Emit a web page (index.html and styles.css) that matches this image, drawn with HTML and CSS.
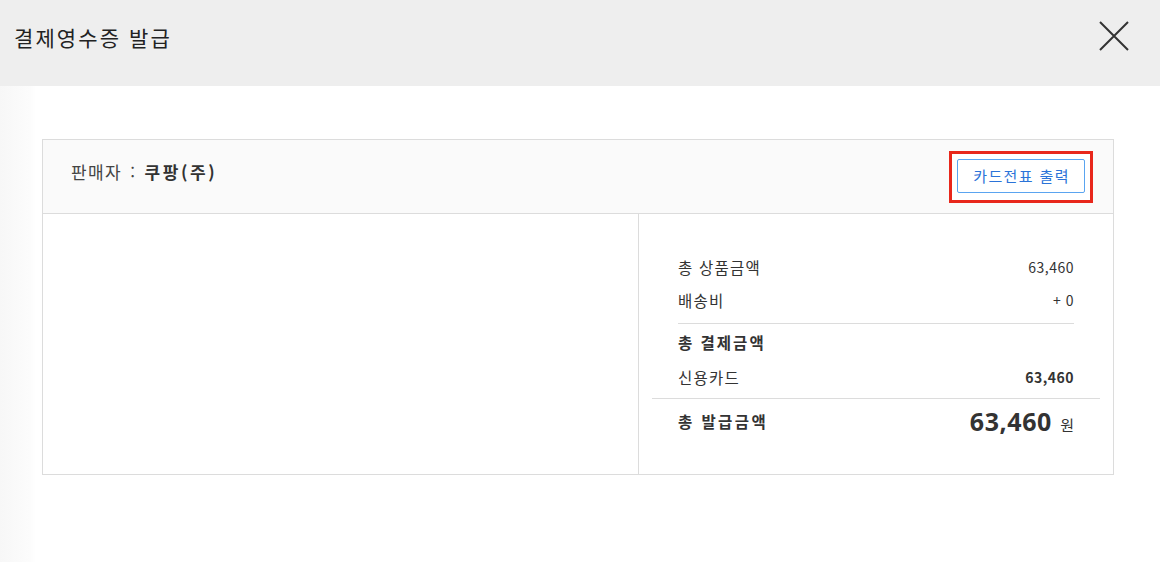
FILE: index.html
```html
<!DOCTYPE html>
<html lang="ko">
<head>
    <meta charset="UTF-8">
    <title>결제영수증 발급</title>
    <link rel="stylesheet" href="styles.css">
</head>
<body>
    <div class="popup-header">
        <h1 class="popup-title">결제영수증 발급</h1>
        <button class="close-btn" type="button" aria-label="닫기">
            <svg width="32" height="32" viewBox="0 0 32 32">
                <path d="M2 2 L30 30 M30 2 L2 30" stroke="#333" stroke-width="2" fill="none"/>
            </svg>
        </button>
    </div>

    <div class="popup-body">
        <div class="receipt">
            <div class="receipt-head">
                <p class="seller">판매자 : <strong>쿠팡(주)</strong></p>
                <div class="highlight">
                    <button class="card-btn" type="button">카드전표 출력</button>
                </div>
            </div>
            <div class="receipt-main">
                <div class="receipt-left"></div>
                <div class="receipt-right">
                    <div class="row"><span>총 상품금액</span><span class="num">63,460</span></div>
                    <div class="row"><span>배송비</span><span class="num">+ 0</span></div>
                    <div class="row row-title sep"><span>총 결제금액</span></div>
                    <div class="row"><span>신용카드</span><span class="num bold">63,460</span></div>
                    <div class="row total">
                        <span class="total-label">총 발급금액</span>
                        <span class="total-amount"><b>63,460</b> 원</span>
                    </div>
                </div>
            </div>
        </div>
    </div>
</body>
</html>
```

FILE: styles.css
```css
body {
    margin: 0;
    padding: 0;
    font-family: "Noto Sans CJK KR", "Noto Sans", sans-serif;
    color: #333;
    background: #fff;
    width: 1160px;
    height: 562px;
    overflow: hidden;
}

.popup-header {
    height: 86px;
    box-sizing: border-box;
    background: #eeeeee;
    display: flex;
    align-items: center;
    justify-content: space-between;
    padding: 0 30px 12px 14px;
}

.popup-title {
    margin: 0;
    font-size: 21px;
    font-weight: normal;
    color: #222;
    letter-spacing: 2.1px;
}

.close-btn {
    border: 0;
    background: none;
    padding: 0;
    width: 32px;
    height: 32px;
    margin-top: -2px;
    cursor: pointer;
}

.popup-body {
    padding: 53px 46px 0 42px;
    background: linear-gradient(90deg, #f7f7f7 0, #fcfcfc 30px, #fff 36px);
    height: 423px;
}

.receipt {
    border: 1px solid #dcdcdc;
}

.receipt-head {
    height: 73px;
    background: #fafafa;
    border-bottom: 1px solid #dcdcdc;
    display: flex;
    align-items: center;
    justify-content: space-between;
    padding: 0 20px 0 28px;
}

.seller {
    margin: 0;
    font-size: 17px;
    letter-spacing: 1.4px;
    word-spacing: 2px;
    color: #444;
    margin-top: -10px;
}

.seller strong {
    color: #333;
    letter-spacing: 2.6px;
}

.highlight {
    border: 3px solid #e8271b;
    padding: 5px 5px 7px 5px;
    background: #fff;
}

.card-btn {
    display: block;
    font-family: inherit;
    font-size: 15px;
    letter-spacing: 1.4px;
    color: #2b73d8;
    background: #fff;
    border: 1px solid #5aa4f0;
    border-radius: 2px;
    height: 34px;
    padding: 0 14px 0 15px;
    cursor: pointer;
}

.receipt-main {
    display: flex;
    height: 260px;
}

.receipt-left {
    width: 595px;
    border-right: 1px solid #dcdcdc;
}

.receipt-right {
    flex: 1;
    padding: 36px 13px 0 13px;
}

.row {
    display: flex;
    justify-content: space-between;
    align-items: center;
    margin: 0 26px;
    height: 33px;
    font-size: 15.5px;
    letter-spacing: 1.2px;
    color: #333;
}

.num {
    font-size: 14px;
    letter-spacing: 0.5px;
}

.bold, .row-title {
    font-weight: bold;
}

.sep {
    border-top: 1px solid #dcdcdc;
    margin-top: 7px;
    height: 36px;
}

.row-title {
    letter-spacing: 2px;
}

.total {
    margin: 5px 0 0 0;
    padding: 0 26px;
    border-top: 1px solid #dcdcdc;
    height: 44px;
    font-weight: bold;
}

.total-label {
    letter-spacing: 2.4px;
}

.total-amount {
    font-weight: normal;
    font-size: 15px;
    letter-spacing: 0;
}

.total-amount b {
    font-family: "Noto Sans", sans-serif;
    font-size: 25px;
    font-weight: bold;
    letter-spacing: 0.6px;
    margin-right: 4px;
}
```
